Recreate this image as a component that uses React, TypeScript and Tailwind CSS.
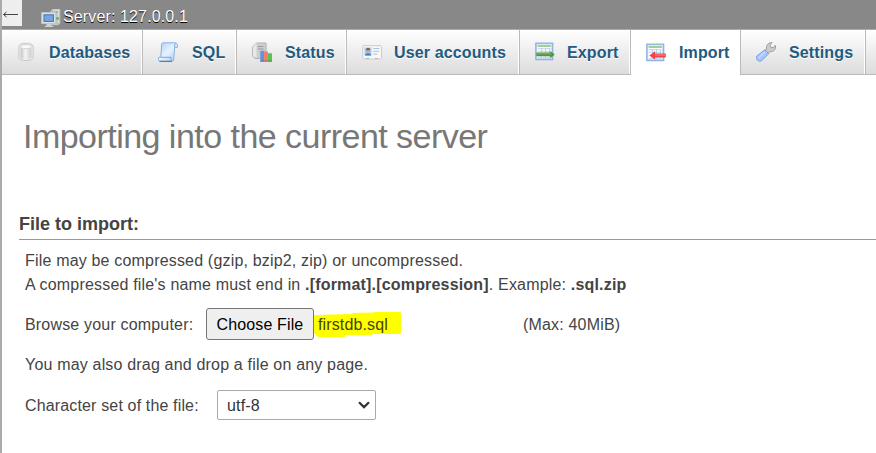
import React from "react";

const DatabaseIcon = () => (
  <svg width="20" height="20" viewBox="0 0 20 20">
    <defs>
      <linearGradient id="cyl">
        <stop offset="0" stopColor="#c4c4c4" />
        <stop offset=".45" stopColor="#f5f5f5" />
        <stop offset="1" stopColor="#cccccc" />
      </linearGradient>
    </defs>
    <path d="M2.9 4.5C2.9 .2 17.1 .2 17.1 4.5v11c0 4-14.2 4-14.2 0z" fill="#f0f0f0" stroke="#c6c6c6" />
    <path d="M4.5 5.5v10c1 2.4 10 2.4 11 0v-10c-2 2-9 2-11 0z" fill="url(#cyl)" />
    <ellipse cx="10" cy="4.7" rx="5.6" ry="2" fill="#fafafa" stroke="#cccccc" strokeWidth=".8" />
  </svg>
);

const SqlIcon = () => (
  <svg width="20" height="20" viewBox="0 0 20 20">
    <defs>
      <linearGradient id="scroll" x2="1" y2="1">
        <stop offset="0" stopColor="#a9cef7" />
        <stop offset=".5" stopColor="#e6f2ff" />
        <stop offset="1" stopColor="#a3caf3" />
      </linearGradient>
    </defs>
    <path d="M5 .8h12.5c1.8.3 2.2 2.5 1.8 4.6h-2.6L15.6 18c-.2 1-.8 1.4-2 1.4H1.5C.2 19 .3 16.5.8 15.2h2L3.6 3C3.7 1.6 4 .9 5 .8z" fill="url(#scroll)" stroke="#86b1e2" strokeWidth="1" />
    <path d="M16.7 5.4c-.2-2 0-3.4.9-4.2M2.9 15.3h10.2c-.3 1.7 0 3.2.9 3.9" fill="none" stroke="#6d9fd3" strokeWidth=".9" />
    <path d="M1.5 19.3h12.3" stroke="#44789f" strokeWidth="1.1" />
  </svg>
);

const StatusIcon = () => (
  <svg width="20" height="20" viewBox="0 0 20 20">
    <path d="M4.5 1h9.5v15.5H3L.7 14V5z" fill="#cecece" stroke="#b0b0b0" />
    <path d="M4.5 1L1 5v9l3.5 2z" fill="#e8e8e8" />
    <path d="M6 4.5h5.5M6 7h5.5" stroke="#999" strokeWidth="1.2" />
    <path d="M5.5 1.5h8" stroke="#c1c1c1" />
    <rect x="8.3" y="8.8" width="3.8" height="10.2" fill="#6591de" />
    <rect x="12.1" y="9.5" width="3.8" height="9.5" fill="#ef8067" />
    <rect x="15.9" y="11.3" width="4.1" height="7.7" fill="#5bc154" />
    <path d="M8.3 19.2h3.8" stroke="#3569bd" />
    <path d="M12.1 19.2h3.8" stroke="#ce493c" />
    <path d="M15.9 19.2H20" stroke="#2c912d" />
  </svg>
);

const UserIcon = () => (
  <svg width="20" height="20" viewBox="0 0 20 20">
    <rect x=".7" y="3.7" width="18.8" height="13.3" rx="1" fill="#f7f7f7" stroke="#cccccc" />
    <rect x="2.5" y="5.5" width="7" height="8" fill="#9fcafa" />
    <path d="M3 13.5c.1-3 6-3 6 0z" fill="#367fc7" />
    <circle cx="6" cy="8.7" r="1.9" fill="#dba06c" />
    <path d="M4.1 8.3c0-3 3.9-3 3.9 0-1.5-1-2.4-1.1-3.9 0z" fill="#65432b" />
    <path d="M11.3 6.5h6M11.3 9.3h6M11.3 12h4" stroke="#a9c3dc" strokeWidth="1.1" />
    <path d="M4 16.5h3M13 16.5h3" stroke="#b9b9b9" strokeWidth="1.2" />
  </svg>
);

const Sheet = () => (
  <>
    <rect x=".8" y="1.2" width="16.9" height="16.4" fill="#c3daf7" stroke="#8fb1e4" strokeWidth="1.3" />
    <rect x="2.3" y="2.6" width="13.9" height="13.5" fill="#fff" />
    <path d="M2.6 4h13.3" stroke="#92c780" strokeWidth="1.7" />
    <path d="M3 6.7h12.7M3 9.3h12.7M3 15.3h12.7M6.5 6.2V16M10.5 6.2V16M14.5 6.2V16" stroke="#b5cdea" strokeWidth=".9" />
  </>
);

const ExportIcon = () => (
  <svg width="20" height="20" viewBox="0 0 20 20">
    <Sheet />
    <path d="M1.3 10.6h14V8.9l4.5 3.6-4.5 3.7v-1.9h-14z" fill="#4f9641" />
    <path d="M1.8 11.9h14.5" stroke="#7db869" />
  </svg>
);

const ImportIcon = () => (
  <svg width="20" height="20" viewBox="0 0 20 20">
    <Sheet />
    <path d="M19.8 10.5H9.1V8.3l-5.8 4.3 5.8 4.2v-2.3h10.7z" fill="#f14444" />
    <path d="M9 12h10.3" stroke="#ff8585" />
  </svg>
);

const SettingsIcon = () => (
  <svg width="20" height="20" viewBox="0 0 20 20">
    <path d="M10.6 7.2C9.8 3.8 12 .4 16 .5l-2 3 1 2 2.3.1 2.1-2.4c.9 4.2-1.9 6.9-5.5 6.5l-2.4 2.3-3.4-3.3z" fill="#cbcbcb" stroke="#999" strokeWidth=".9" />
    <path d="M8.9 7.8l3.8 3.9-6.9 6.9c-2.8 2.2-6.9-1.4-5-4.7z" fill="#a4c5fb" stroke="#7d9fe2" strokeWidth="1" />
    <path d="M8.8 10.1l-6.2 6" stroke="#c9ddff" strokeWidth="1.4" />
  </svg>
);

const ServerIcon = () => (
  <svg className="shrink-0" width="20" height="20" viewBox="0 0 20 20">
    <path d="M9.5 3l2.2-2h7.6v14.5l-2 1.7H9.5z" fill="#bfc2c0" />
    <path d="M12.4 2.1h5.8M17.3 3v12" stroke="#e5e5e5" />
    <path d="M13.5 4.3h3.3" stroke="#929692" />
    <rect x="15.2" y="9.3" width="2.6" height="2.4" fill="#43b54b" />
    <rect x=".7" y="4.6" width="14" height="11" fill="#dfe1e0" stroke="#c4c7c6" />
    <rect x="3" y="6.8" width="9.4" height="6.6" fill="#74a5e6" stroke="#4374b6" />
    <path d="M5.5 16h4.6v1.7h2V19H3.8v-1.3h1.7z" fill="#d0d2d2" />
  </svg>
);

const tabs = [
  { label: "Databases", Icon: DatabaseIcon, size: "w-[141px] pl-[14px] gap-[13px]" },
  { label: "SQL", Icon: SqlIcon, size: "w-[94px] pl-[15px] gap-[14px]" },
  { label: "Status", Icon: StatusIcon, size: "w-[110px] pl-[15px] gap-[13px]" },
  { label: "User accounts", Icon: UserIcon, size: "w-[173px] pl-[15px] gap-[12px]" },
  { label: "Export", Icon: ExportIcon, size: "w-[111px] pl-[15px] gap-[12px]" },
  { label: "Import", Icon: ImportIcon, size: "w-[110px] pl-[15px] gap-[13px]", active: true },
  { label: "Settings", Icon: SettingsIcon, size: "w-[125px] pl-[15px] gap-[13px]" },
];

export default function App() {
  return (
    <div className="h-[453px] w-[876px] overflow-hidden border-l-2 border-[#aaa] bg-white font-['Liberation_Sans',Arial,sans-serif] text-[16px] leading-6 tracking-[0.18px] text-[#444]">
      <header className="flex h-[29px] bg-[#888]">
        <div className="flex h-[26px] w-[20px] shrink-0 bg-[#eee]">
          <svg width="20" height="26" viewBox="0 0 20 26" fill="none" stroke="#444" strokeWidth="1">
            <path d="M1.5 14.5H16M4.5 12l-3 2.5 3 2.5" />
          </svg>
        </div>
        <div className="flex pl-[19px] pt-[8px]">
          <ServerIcon />
          <span className="-mt-[3px] ml-[2px] whitespace-nowrap tracking-[0.13px] text-white [text-shadow:0_1px_0_#000]">Server: 127.0.0.1</span>
        </div>
      </header>

      <nav className="flex h-[46px] border-b border-t border-b-[#bbb] border-t-[#aaa] bg-linear-to-b from-white to-[#dcdcdc]">
        {tabs.map(({ label, Icon, size, active }) => (
          <div
            key={label}
            className={`flex shrink-0 items-center border-r border-[#bbb] ${size} ${active ? "-mb-px bg-white" : "shadow-[inset_-1px_0_0_#fff]"}`}
          >
            <span className="shrink-0"><Icon /></span>
            <span className={`whitespace-nowrap font-bold tracking-[0.13px] text-[#235a81] [text-shadow:0_1px_0_#fff] ${active ? "" : "pt-[2px]"}`}>{label}</span>
          </div>
        ))}
      </nav>

      <main>
        <h1 className="ml-[21px] mt-[41px] whitespace-nowrap text-[34px] leading-[40px] tracking-[-0.53px] text-[#777]">Importing into the current server</h1>
        <section className="ml-[17px] mt-[54px]">
          <h2 className="h-[30px] border-b border-[#999] text-[18px] font-bold leading-[29px] tracking-normal">File to import:</h2>
          <div className="pl-[6px] pt-[9px]">
            <p className="whitespace-nowrap">File may be compressed (gzip, bzip2, zip) or uncompressed.</p>
            <p className="whitespace-nowrap">A compressed file's name must end in <b>.[format].[compression]</b>. Example: <b>.sql.zip</b></p>
            <div className="mt-[11px] flex h-[32px] items-center">
              <span className="w-[181px] shrink-0 whitespace-nowrap pt-px">Browse your computer:</span>
              <button className="-mt-px h-[32px] w-[108px] shrink-0 rounded-[3px] border border-[#767676] bg-[#efefef] pt-[2px] tracking-[0.13px] text-black">Choose File</button>
              <div className="relative h-[32px] w-[209px] shrink-0">
                <svg className="absolute left-0 top-[3px]" width="88" height="28" viewBox="0 0 88 28">
                  <path d="M0 4l38-1 1-1 21-.5L61 1h25l1 1v21H59l-1 1H31v2H5v1L0 22z" fill="#ff0" />
                </svg>
                <span className="relative ml-[4px] leading-[34px] tracking-[0.13px] text-[#444400]">firstdb.sql</span>
              </div>
              <span className="whitespace-nowrap pt-px">(Max: 40MiB)</span>
            </div>
            <p className="mt-[13px] whitespace-nowrap">You may also drag and drop a file on any page.</p>
            <div className="mt-[13px] flex h-[30px] items-center">
              <span className="w-[192px] shrink-0 whitespace-nowrap pt-px tracking-[0.15px]">Character set of the file:</span>
              <div className="flex h-[30px] w-[159px] items-center justify-between rounded-[2px] border border-[#aaa] bg-white pl-[9px] pr-[5px] text-[#333]">
                <span className="pt-px">utf-8</span>
                <svg width="12" height="8" viewBox="0 0 12 8" fill="none" stroke="#333" strokeWidth="2.2">
                  <path d="M1 1.2l5 4.9 5-4.9" />
                </svg>
              </div>
            </div>
          </div>
        </section>
      </main>
    </div>
  );
}
